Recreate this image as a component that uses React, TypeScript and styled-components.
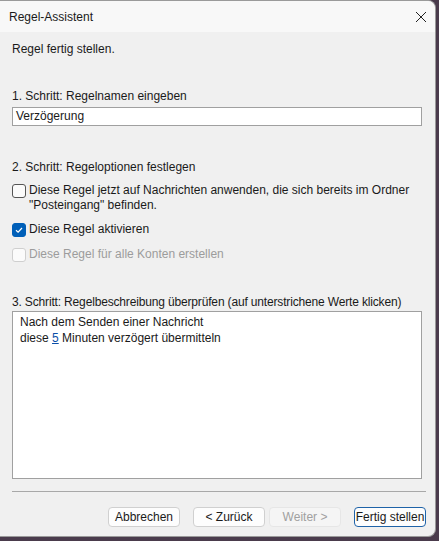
import styled, { createGlobalStyle } from "styled-components";

const Global = createGlobalStyle`
  html, body {
    margin: 0;
    padding: 0;
    background: #4a3b4c;
    width: 439px;
    height: 541px;
    overflow: hidden;
  }
  body {
    font-family: "Liberation Sans", Arial, sans-serif;
    font-size: 12px;
    color: #1a1a1a;
  }
`;

const Window = styled.div`
  width: 436px;
  height: 537px;
  box-sizing: border-box;
  background: #f0f0f0;
  border: 1px solid #9a9a9a;
  border-left: none;
  border-radius: 0 8px 8px 0;
  overflow: hidden;
  display: flex;
  flex-direction: column;
`;

const TitleBar = styled.div`
  height: 31px;
  flex: none;
  background: #f8f8f8;
  display: flex;
  align-items: center;
  justify-content: space-between;
  padding: 0 7px 0 9px;
`;

const Title = styled.span`
  font-size: 12px;
  color: #1a1a1a;
`;

const Body = styled.div`
  flex: 1;
  display: flex;
  flex-direction: column;
  padding: 9px 9px 0 12px;
`;

const Heading = styled.div<{ $top: number; $tight?: boolean }>`
  margin-top: ${(p) => p.$top}px;
  line-height: 16px;
  white-space: nowrap;
  letter-spacing: ${(p) => (p.$tight ? "-0.16px" : "normal")};
`;

const TextInput = styled.div`
  margin-top: 3px;
  margin-right: 4px;
  height: 19px;
  box-sizing: border-box;
  background: #fff;
  border: 1px solid #a0a0a0;
  padding: 0 3px;
  line-height: 17px;
`;

const CheckRow = styled.div<{ $top: number; $disabled?: boolean }>`
  margin-top: ${(p) => p.$top}px;
  display: flex;
  align-items: flex-start;
  gap: 3px;
  line-height: 15px;
  white-space: nowrap;
  color: ${(p) => (p.$disabled ? "#9c9c9c" : "#1a1a1a")};
`;

const Box = styled.span<{ $checked?: boolean; $disabled?: boolean }>`
  flex: none;
  width: 14px;
  height: 14px;
  box-sizing: border-box;
  border-radius: 3px;
  margin-top: 1px;
  display: flex;
  align-items: center;
  justify-content: center;
  background: ${(p) => (p.$checked ? "#005fb8" : "#fbfbfb")};
  border: 1px solid
    ${(p) => (p.$checked ? "#005fb8" : p.$disabled ? "#cfcfcf" : "#555")};
`;

const Description = styled.div`
  margin-top: 1px;
  margin-right: 4px;
  height: 168px;
  box-sizing: border-box;
  background: #fff;
  border: 1px solid #a0a0a0;
  padding: 2px 7px;
  line-height: 16px;
`;

const Link = styled.span`
  color: #0a4ea8;
  text-decoration: underline;
`;

const Separator = styled.div`
  margin-top: 12px;
  height: 1px;
  background: #a8a8a8;
`;

const Buttons = styled.div`
  margin-top: 15px;
  display: flex;
  justify-content: flex-end;
  gap: 4px;
`;

const Button = styled.div<{ $primary?: boolean; $disabled?: boolean; $gap?: number }>`
  width: 72px;
  height: 20px;
  box-sizing: border-box;
  margin-left: ${(p) => p.$gap ?? 0}px;
  display: flex;
  align-items: center;
  justify-content: center;
  border-radius: 4px;
  background: ${(p) => (p.$disabled ? "#f5f5f5" : "#fdfdfd")};
  color: ${(p) => (p.$disabled ? "#a0a0a0" : "#1a1a1a")};
  border: 1px solid
    ${(p) => (p.$primary ? "#1f63a8" : p.$disabled ? "#e6e6e6" : "#d0d0d0")};
  white-space: nowrap;
`;

function Check() {
  return (
    <svg width="10" height="10" viewBox="0 0 10 10">
      <path d="M2 5.2 L4.1 7.2 L8 3" fill="none" stroke="#fff" strokeWidth="1.2" />
    </svg>
  );
}

export default function App() {
  return (
    <>
      <Global />
      <Window>
        <TitleBar>
          <Title>Regel-Assistent</Title>
          <svg width="14" height="14" viewBox="0 0 14 14">
            <path d="M2 2 L12 12 M12 2 L2 12" stroke="#222" strokeWidth="1" />
          </svg>
        </TitleBar>
        <Body>
          <Heading $top={0}>Regel fertig stellen.</Heading>
          <Heading $top={31}>1. Schritt: Regelnamen eingeben</Heading>
          <TextInput>Verzögerung</TextInput>
          <Heading $top={33}>2. Schritt: Regeloptionen festlegen</Heading>
          <CheckRow $top={8}>
            <Box />
            <span>
              Diese Regel jetzt auf Nachrichten anwenden, die sich bereits im Ordner
              <br />
              "Posteingang" befinden.
            </span>
          </CheckRow>
          <CheckRow $top={9}>
            <Box $checked>
              <Check />
            </Box>
            <span>Diese Regel aktivieren</span>
          </CheckRow>
          <CheckRow $top={10} $disabled>
            <Box $disabled />
            <span>Diese Regel für alle Konten erstellen</span>
          </CheckRow>
          <Heading $top={32} $tight>
            3. Schritt: Regelbeschreibung überprüfen (auf unterstrichene Werte klicken)
          </Heading>
          <Description>
            Nach dem Senden einer Nachricht
            <br />
            diese <Link>5</Link> Minuten verzögert übermitteln
          </Description>
          <Separator />
          <Buttons>
            <Button>Abbrechen</Button>
            <Button $gap={9}>&lt; Zurück</Button>
            <Button $disabled>Weiter &gt;</Button>
            <Button $primary $gap={9}>Fertig stellen</Button>
          </Buttons>
        </Body>
      </Window>
    </>
  );
}
